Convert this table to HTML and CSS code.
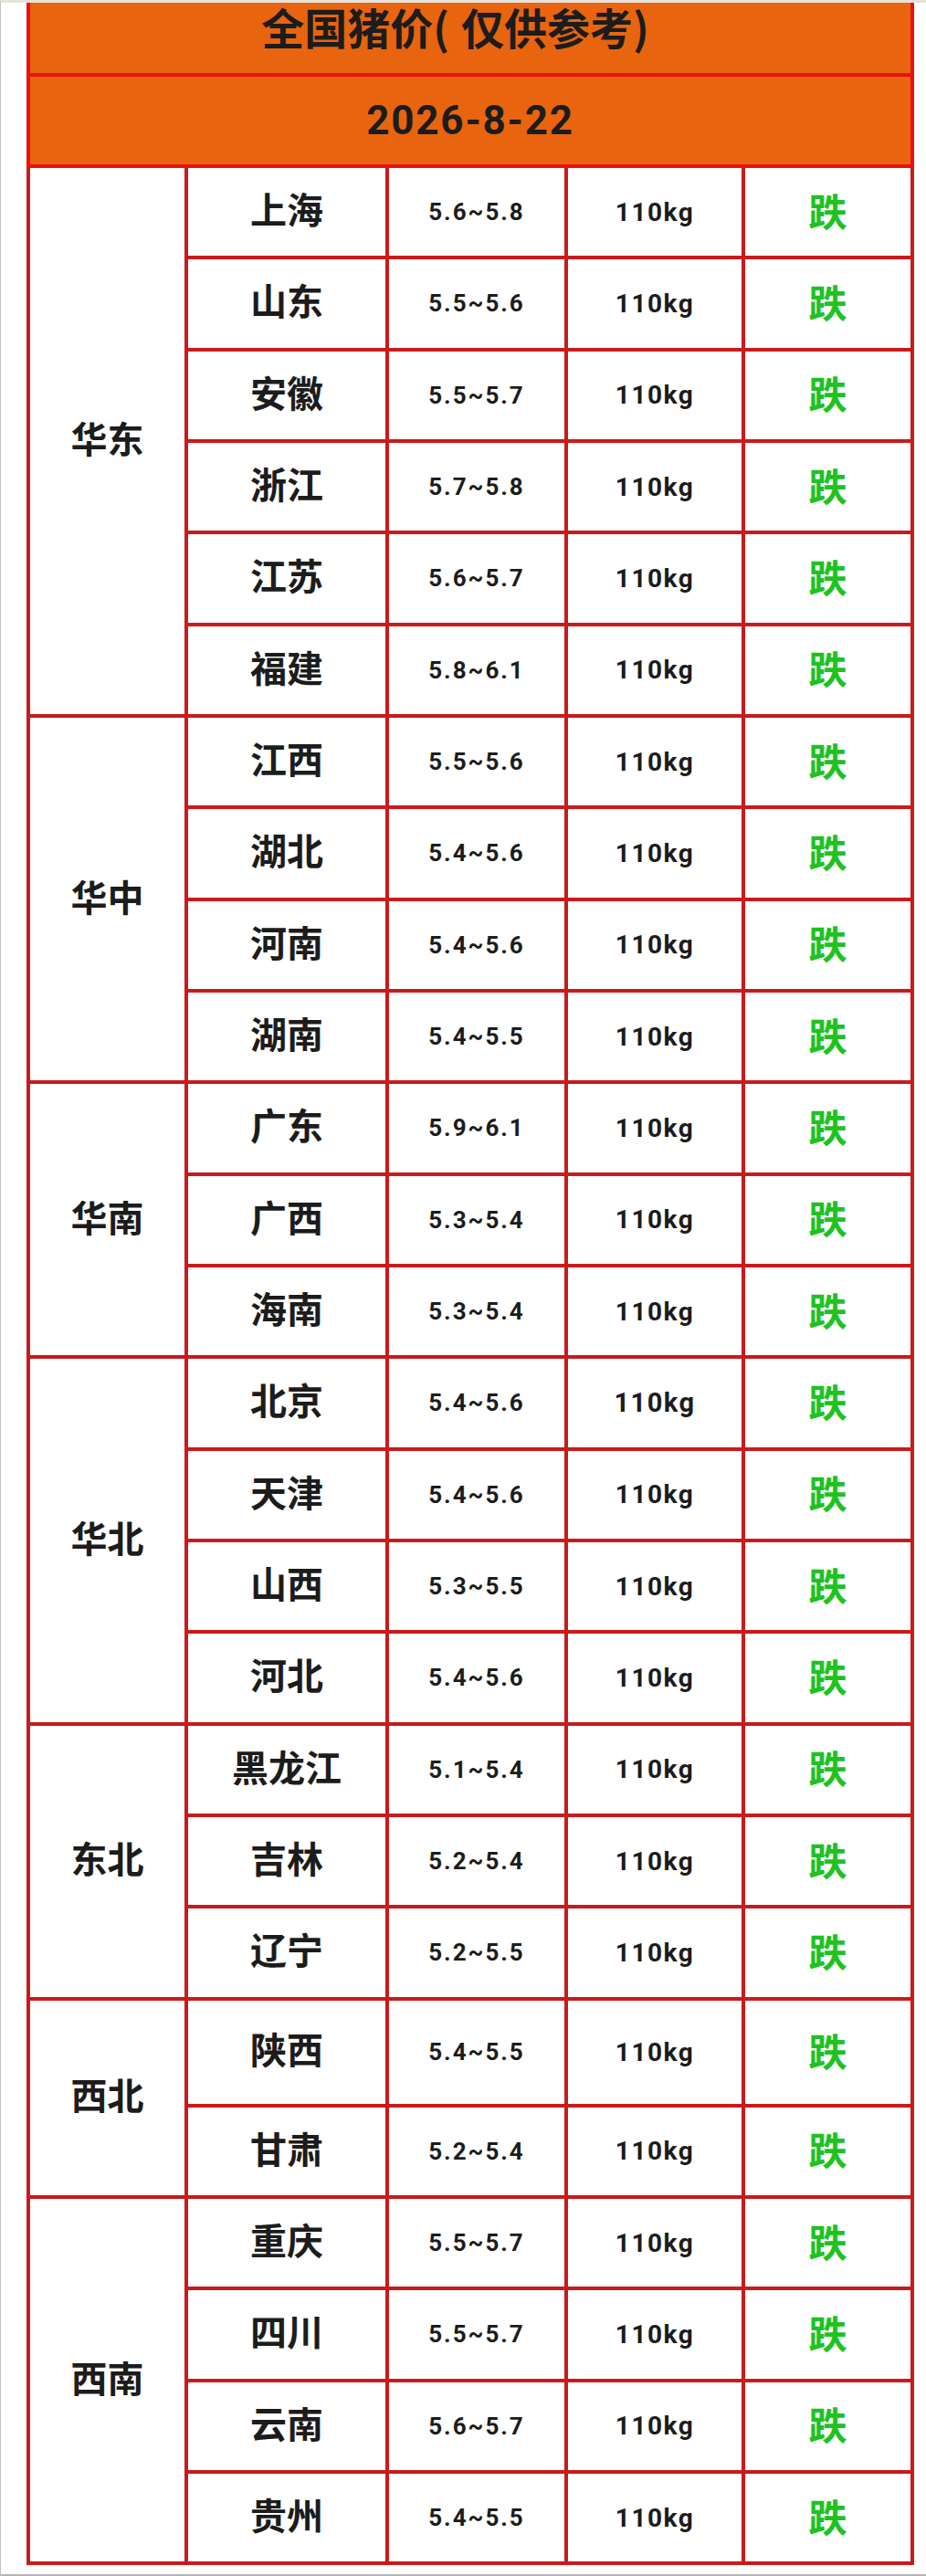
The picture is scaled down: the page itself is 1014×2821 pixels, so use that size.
FILE: index.html
```html
<!DOCTYPE html>
<html lang="zh-CN">
<head>
<meta charset="utf-8">
<title>全国猪价(仅供参考)</title>
<link rel="stylesheet" href="styles.css">
</head>
<body>
<div class="page">
  <div class="sheet">
    <div class="head">
      <div class="title">全国猪价<span class="paren">(</span>仅供参考<span class="paren">)</span></div>
      <div class="date">2026-8-22</div>
    </div>
    <div class="grid">
      <div class="region s6">华东</div>
      <div class="prov">上海</div><div class="price">5.6~5.8</div><div class="wt">110kg</div><div class="trend">跌</div>
      <div class="prov">山东</div><div class="price">5.5~5.6</div><div class="wt">110kg</div><div class="trend">跌</div>
      <div class="prov">安徽</div><div class="price">5.5~5.7</div><div class="wt">110kg</div><div class="trend">跌</div>
      <div class="prov">浙江</div><div class="price">5.7~5.8</div><div class="wt">110kg</div><div class="trend">跌</div>
      <div class="prov">江苏</div><div class="price">5.6~5.7</div><div class="wt">110kg</div><div class="trend">跌</div>
      <div class="prov">福建</div><div class="price">5.8~6.1</div><div class="wt">110kg</div><div class="trend">跌</div>

      <div class="region s4">华中</div>
      <div class="prov">江西</div><div class="price">5.5~5.6</div><div class="wt">110kg</div><div class="trend">跌</div>
      <div class="prov">湖北</div><div class="price">5.4~5.6</div><div class="wt">110kg</div><div class="trend">跌</div>
      <div class="prov">河南</div><div class="price">5.4~5.6</div><div class="wt">110kg</div><div class="trend">跌</div>
      <div class="prov">湖南</div><div class="price">5.4~5.5</div><div class="wt">110kg</div><div class="trend">跌</div>

      <div class="region s3">华南</div>
      <div class="prov">广东</div><div class="price">5.9~6.1</div><div class="wt">110kg</div><div class="trend">跌</div>
      <div class="prov">广西</div><div class="price">5.3~5.4</div><div class="wt">110kg</div><div class="trend">跌</div>
      <div class="prov">海南</div><div class="price">5.3~5.4</div><div class="wt">110kg</div><div class="trend">跌</div>

      <div class="region s4">华北</div>
      <div class="prov">北京</div><div class="price">5.4~5.6</div><div class="wt wt-big">110kg</div><div class="trend">跌</div>
      <div class="prov">天津</div><div class="price">5.4~5.6</div><div class="wt">110kg</div><div class="trend">跌</div>
      <div class="prov">山西</div><div class="price">5.3~5.5</div><div class="wt">110kg</div><div class="trend">跌</div>
      <div class="prov">河北</div><div class="price">5.4~5.6</div><div class="wt">110kg</div><div class="trend">跌</div>

      <div class="region s3">东北</div>
      <div class="prov">黑龙江</div><div class="price">5.1~5.4</div><div class="wt">110kg</div><div class="trend">跌</div>
      <div class="prov">吉林</div><div class="price">5.2~5.4</div><div class="wt">110kg</div><div class="trend">跌</div>
      <div class="prov">辽宁</div><div class="price">5.2~5.5</div><div class="wt">110kg</div><div class="trend">跌</div>

      <div class="region s2">西北</div>
      <div class="prov tall">陕西</div><div class="price tall">5.4~5.5</div><div class="wt tall">110kg</div><div class="trend tall">跌</div>
      <div class="prov">甘肃</div><div class="price">5.2~5.4</div><div class="wt">110kg</div><div class="trend">跌</div>

      <div class="region s4">西南</div>
      <div class="prov">重庆</div><div class="price">5.5~5.7</div><div class="wt">110kg</div><div class="trend">跌</div>
      <div class="prov">四川</div><div class="price">5.5~5.7</div><div class="wt">110kg</div><div class="trend">跌</div>
      <div class="prov">云南</div><div class="price">5.6~5.7</div><div class="wt">110kg</div><div class="trend">跌</div>
      <div class="prov">贵州</div><div class="price">5.4~5.5</div><div class="wt">110kg</div><div class="trend">跌</div>
    </div>
  </div>
</div>
</body>
</html>
```

FILE: styles.css
```css
* {
  box-sizing: border-box;
}

html, body {
  margin: 0;
  padding: 0;
  background: #ffffff;
}

body {
  font-family: "Noto Sans CJK SC", "Noto Sans", sans-serif;
  color: #1c1c1c;
}

.page {
  width: 1014px;
  height: 2821px;
  border-top: 3px solid #e7e2d9;
  border-left: 1px solid #c2c2c2;
  border-bottom: 2px solid #b3b3b3;
  padding-left: 28px;
}

.sheet {
  width: 972px;
}

.head {
  background: #e8640f;
  border-left: 4px solid #ec1010;
  border-right: 4px solid #ec1010;
}

.title {
  height: 81px;
  border-bottom: 4px solid #ec1010;
  display: flex;
  align-items: center;
  justify-content: center;
  padding-bottom: 26px;
  padding-right: 20px;
  font-size: 47px;
  font-weight: 700;
  line-height: 1;
  white-space: nowrap;
}

.paren {
  margin-right: 13px;
}

.date {
  height: 100px;
  border-bottom: 4px solid #ec1010;
  display: flex;
  align-items: center;
  justify-content: center;
  font-family: Roboto, "Noto Sans", sans-serif;
  font-size: 44px;
  font-weight: 700;
  letter-spacing: 1.8px;
  line-height: 1;
}

.grid {
  display: grid;
  grid-template-columns: 169px 216px 192px 190px 181px;
  grid-auto-rows: minmax(96.33px, auto);
  gap: 4px;
  padding: 0 4px 4px 4px;
  background: #c81b1c;
}

.grid > div {
  background: #ffffff;
  display: flex;
  align-items: center;
  justify-content: center;
  white-space: nowrap;
}

.region,
.prov {
  font-size: 40px;
  font-weight: 700;
  padding-bottom: 8px;
}

.s6 { grid-row: span 6; }
.s4 { grid-row: span 4; }
.s3 { grid-row: span 3; }
.s2 { grid-row: span 2; }

.tall {
  min-height: 113px;
}

.price {
  font-family: Roboto, "Noto Sans", sans-serif;
  font-size: 26px;
  font-weight: 700;
  letter-spacing: 2px;
}

.wt {
  font-family: Roboto, "Noto Sans", sans-serif;
  font-size: 28px;
  font-weight: 700;
  letter-spacing: 1.5px;
}

.wt-big {
  font-size: 29px;
}

.trend {
  font-size: 42px;
  font-weight: 700;
  color: #1fc21f;
  padding-bottom: 6px;
}
```
